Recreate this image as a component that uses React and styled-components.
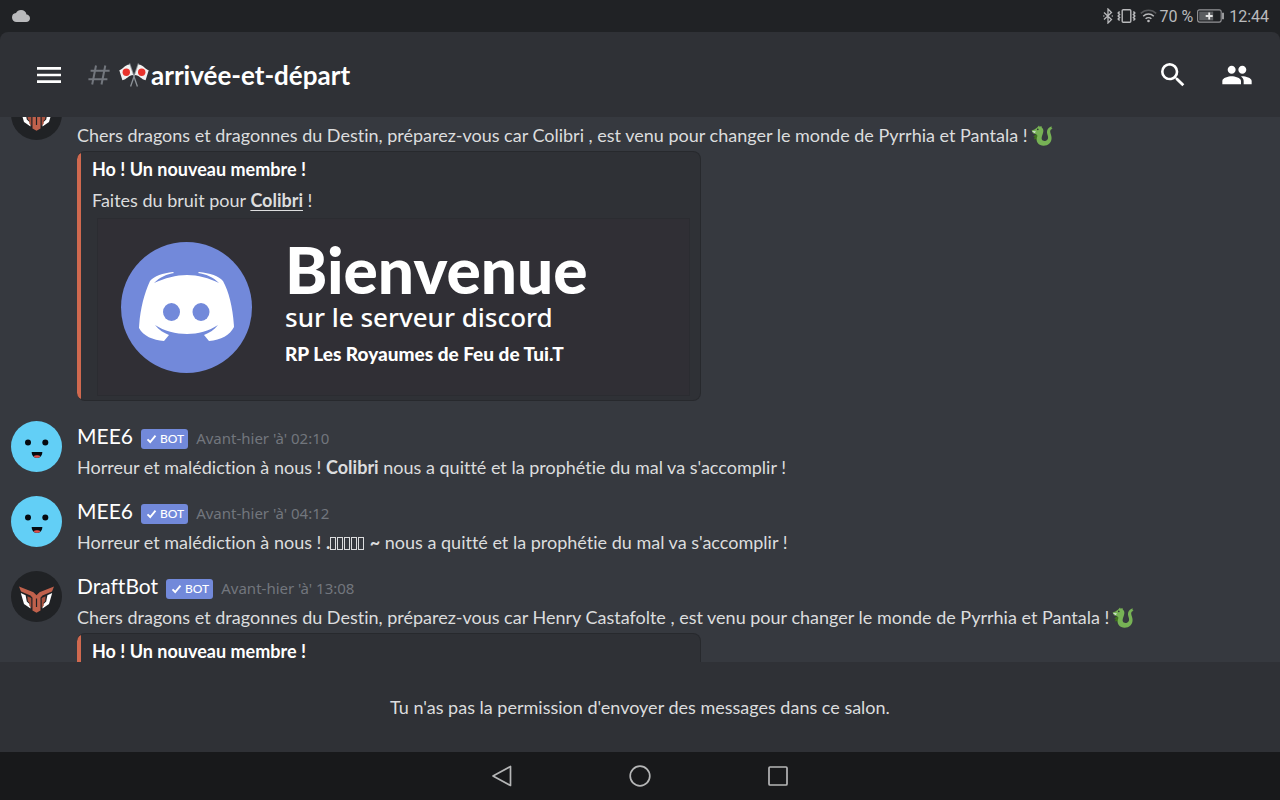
import React, { useLayoutEffect, useRef } from "react";
import styled, { createGlobalStyle } from "styled-components";
import { MdMenu, MdSearch, MdPeople, MdCloud } from "react-icons/md";

const GlobalStyle = createGlobalStyle`
  * {
    box-sizing: border-box;
  }

  body {
    margin: 0;
    background: #202225;
    color: #dcddde;
    font-family: Lato, "Noto Sans", sans-serif;
    font-size: 18px;
    font-variant-ligatures: none;
  }
`;

const Screen = styled.div`
  display: flex;
  flex-direction: column;
  height: 100vh;
  background: #202225;
`;

/* ---------- status bar ---------- */

const StatusBar = styled.div`
  display: flex;
  align-items: center;
  justify-content: space-between;
  flex: none;
  height: 32px;
  padding: 0 11px 0 12px;
  color: #b9babc;
  font-family: Roboto, sans-serif;
  font-size: 16px;
`;

const StatusIcons = styled.div`
  display: flex;
  align-items: center;
  gap: 4px;
`;

const Percent = styled.span`
  margin-left: -2px;
`;

/* ---------- header ---------- */

const Header = styled.header`
  display: flex;
  align-items: center;
  justify-content: space-between;
  flex: none;
  height: 85px;
  padding: 0 27px 0 33px;
  background: #2f3136;
  border-radius: 8px 8px 0 0;
`;

const HeaderGroup = styled.div`
  display: flex;
  align-items: center;
  gap: ${(props) => props.$gap};
`;

const IconButton = styled.button`
  display: flex;
  padding: 0;
  border: 0;
  background: none;
  color: #fff;
  font-size: 32px;
  cursor: pointer;
`;

const ChannelName = styled.h1`
  display: flex;
  align-items: center;
  gap: 2px;
  margin: 0;
  color: #fff;
  font-size: 26px;
  font-weight: 700;
  line-height: 32px;
`;

const Channel = styled.div`
  display: flex;
  align-items: center;
  gap: 9px;
`;

/* ---------- messages ---------- */

const MessageList = styled.main`
  flex: 1;
  min-height: 0;
  padding-top: 20px;
  overflow-y: auto;
  background: #36393f;
  scrollbar-width: none;
`;

const MessageRow = styled.article`
  display: flex;
  gap: 15px;
  padding: 0 11px 13px;
`;

const Avatar = styled.svg`
  flex: none;
  width: 51px;
  height: 51px;
`;

const MessageBody = styled.div`
  flex: 1;
  min-width: 0;
`;

const MessageHead = styled.div`
  display: flex;
  align-items: baseline;
  gap: 8px;
  height: 30px;
  line-height: 30px;
`;

const Author = styled.span`
  color: #fff;
  font-size: 21px;
`;

const BotTag = styled.span`
  display: flex;
  align-items: center;
  gap: 3px;
  height: 20px;
  padding: 0 4px 0 5px;
  border-radius: 3px;
  background: #7289da;
  color: #fff;
  font-size: 12px;
  font-weight: 500;
  line-height: 20px;
`;

const Time = styled.time`
  color: #72767d;
  font-family: "Noto Sans", sans-serif;
  font-size: 15px;
`;

const Text = styled.p`
  margin: 0;
  line-height: 32px;
`;

const MissingGlyph = styled.span`
  display: inline-block;
  width: 6px;
  height: 13px;
  margin-right: 1px;
  border: 1px solid currentColor;
  vertical-align: -1px;
`;

const Emoji = styled.svg`
  margin-left: 3px;
  vertical-align: -4px;
`;

/* ---------- embed ---------- */

const Embed = styled.section`
  max-width: 624px;
  margin-bottom: 7px;
  padding: 2px 10px 4px 15px;
  border: 1px solid #27292d;
  border-left: 0;
  border-radius: 8px;
  background: linear-gradient(to right, #d0694f 4px, #2f3136 4px);
`;

const EmbedTitle = styled.h2`
  margin: 0;
  color: #fff;
  font-size: 18px;
  font-weight: 700;
  line-height: 30px;
`;

const EmbedText = styled.p`
  margin: 0;
  line-height: 32px;
`;

const Underlined = styled.strong`
  text-decoration: underline;
  text-underline-offset: 3px;
`;

const Banner = styled.div`
  display: flex;
  align-items: center;
  gap: 33px;
  height: 178px;
  margin: 2px 0 0 5px;
  padding-left: 23px;
  border: 1px solid #2b2c31;
  background: #302f35;
  color: #fff;
`;

const BannerWords = styled.div`
  display: flex;
  flex-direction: column;
`;

const Welcome = styled.span`
  font-size: 64px;
  font-weight: 900;
  line-height: 60px;
`;

const OnServer = styled.span`
  font-family: "Noto Sans", sans-serif;
  font-size: 26px;
  font-weight: 500;
  line-height: 34px;
`;

const ServerName = styled.span`
  font-size: 19px;
  font-weight: 900;
  line-height: 40px;
`;

/* ---------- bottom ---------- */

const NoPermission = styled.footer`
  display: flex;
  align-items: center;
  justify-content: center;
  flex: none;
  height: 90px;
  background: #2f3136;
`;

const NavBar = styled.nav`
  display: flex;
  align-items: center;
  justify-content: center;
  gap: 114px;
  flex: none;
  height: 48px;
  background: #18191b;
`;

const NavButton = styled.button`
  display: flex;
  padding: 0;
  border: 0;
  background: none;
  color: #b5b6b7;
  cursor: pointer;
`;

/* ---------- drawings ---------- */

const Bluetooth = () => (
  <svg width="10" height="16" viewBox="0 0 10 16" fill="none" stroke="currentColor" strokeWidth="1.3">
    <path d="M1 4.5 8.5 11.5 5 15V1L8.5 4.5 1 11.5" />
    <path d="M0.8 8h.1M9.2 8h.1" strokeLinecap="round" />
  </svg>
);

const Vibrate = () => (
  <svg width="19" height="16" viewBox="0 0 19 16" fill="none" stroke="currentColor" strokeWidth="1.4">
    <rect x="5.2" y="1.7" width="8.6" height="12.6" rx="1" />
    <path d="M2.6 3.5 1.2 5l1.4 1.5L1.2 8l1.4 1.5L1.2 11l1.4 1.5M16.4 3.5 17.8 5l-1.4 1.5L17.8 8l-1.4 1.5 1.4 1.5-1.4 1.5" strokeWidth="1.5" />
  </svg>
);

const Wifi = () => (
  <svg width="17" height="14" viewBox="0 0 17 14" fill="none" stroke="currentColor" strokeWidth="1.5">
    <path d="M.8 4.4a11 11 0 0 1 15.4 0" opacity=".35" />
    <path d="M3.2 7.2a7.6 7.6 0 0 1 10.6 0M5.6 9.8a4.2 4.2 0 0 1 5.8 0" />
    <circle cx="8.5" cy="12" r="1.3" fill="currentColor" stroke="none" />
  </svg>
);

const Battery = () => (
  <svg width="28" height="14" viewBox="0 0 28 14">
    <rect x=".6" y=".9" width="23.6" height="12.2" rx="2" fill="none" stroke="currentColor" strokeOpacity=".75" strokeWidth="1.1" />
    <rect x="2.2" y="2.6" width="14" height="8.8" fill="#5b5d60" />
    <path d="M12.2 3.5v7M8.7 7h7" stroke="#e6e6e6" strokeWidth="1.8" />
    <path d="M26 3.8v6.4" stroke="currentColor" strokeWidth="1.6" />
  </svg>
);

const Hash = () => (
  <svg width="22" height="20" viewBox="0 0 22 20" fill="none" stroke="#72767d" strokeWidth="2">
    <path d="M8 .5 4.2 19.5M17.3.5 13.5 19.5M2.6 5.7h19M.4 14.2h19" />
  </svg>
);

const CrossedFlags = () => (
  <svg width="30" height="24" viewBox="0 0 30 24">
    <path d="M10.5.5 18.4 23.5M19.5.5 11.6 23.5" stroke="#8d9399" strokeWidth="1.3" />
    <path d="M.3 7.2C3.8 6.6 5.4 2 10.6 1.6L14.2 12C9.6 12.2 7.6 16.6 3.4 17.2z" fill="#f1f1f1" />
    <path d="M29.7 7.2C26.2 6.6 24.6 2 19.4 1.6L15.8 12c4.6.2 6.6 4.6 10.8 5.2z" fill="#f1f1f1" />
    <circle cx="7.3" cy="9.3" r="3.7" fill="#e8322b" />
    <circle cx="22.7" cy="9.3" r="3.7" fill="#e8322b" />
  </svg>
);

const Dragon = () => (
  <Emoji width="22" height="21" viewBox="0 0 22 21">
    <path d="M4.6 9.5 2.2 11.4l1.6.7-1 2.3 2.4-.3.9 2.1 2-2.4-.6-4z" fill="#3e721d" />
    <path
      d="M6.2 2.4 8 .6l.6 1.2L10.4.9l.4 1.5C12.4 3.6 12.7 5.6 12 8c-.7 2.6-1.9 4.6-1.1 6.6.8 1.900 4 1.800 5.400.2 1.600-2 .3-4.200-.2-6.600-.5-2.600.6-5.300 3.400-6.500L21 1.600 20.400 3l1.200.8-1.700.7c-1.300 1.500-.6 3.300.1 5.200 1 3 .8 6.500-1.600 8.800-3.300 3.100-9.200 2.900-11.700-.6-1.700-2.500-1.100-4.800-.2-7.100L5.200 9.300 2 8.200.6 5.400 3.400 4.400z"
      fill="#77b255"
    />
    <path d="M.8 6 5 6.4 3.600 8z" fill="#e1e8ed" />
    <circle cx="6.8" cy="4.4" r=".8" fill="#292f33" />
  </Emoji>
);

const DraftBotAvatar = () => (
  <Avatar viewBox="0 0 51 51">
    <circle cx="25.5" cy="25.5" r="25.5" fill="#202225" />
    <path d="M9.800 22 14.600 24.200 15.800 30.600 19.500 34V37.500L13 33z" fill="#fff" />
    <path d="M41.200 22 36.400 24.200 35.200 30.600 31.500 34V37.500L38 33z" fill="#fff" />
    <path
      d="M8 15.600 22.500 21.300 25.500 24.300 28.500 21.300 43 15.600 41 20.600 31.500 24.600 29.500 26.800V39.500L25.500 41.700 21.500 39.500V26.800L19.500 24.600 10 20.600z"
      fill="#c0614c"
    />
    <path d="M16.400 25.200 20.300 27V36.800L18.300 34.800V31.400L16.800 30.200zM34.600 25.200 30.700 27V36.800L32.700 34.800V31.400L34.200 30.200z" fill="#a95340" />
    <path d="M25.500 27.500v8.500" stroke="#202225" strokeWidth="1.200" />
  </Avatar>
);

const Mee6Avatar = () => (
  <Avatar viewBox="0 0 51 51">
    <circle cx="25.5" cy="25.5" r="25.5" fill="#62cff6" />
    <circle cx="17" cy="21.5" r="3" fill="#050a10" />
    <circle cx="34.3" cy="21.5" r="3" fill="#050a10" />
    <path d="M20.7 31h10.600c0 3.500-2 5.800-5.300 5.800S20.700 34.500 20.700 31z" fill="#050a10" />
    <path d="M22.600 35.200c1.500-1.300 5.300-1.300 6.800 0-1.600 2.100-5.200 2.100-6.800 0z" fill="#e0524f" />
  </Avatar>
);

const DiscordLogo = () => (
  <svg width="131" height="131" viewBox="0 0 131 131">
    <circle cx="65.5" cy="65.5" r="65.5" fill="#7289da" />
    <path
      d="M29 39C33 34 42 31 52 30L53 31C46 32 39 35 33 41 44 36 55 33 66 33S88 36 98 41C92 35 85 32 77 31L78 30C89 31 98 34 102 39 108 50 112 66 113 85 109 93 100 98 88 99L83 93C88 91 93 88 97 83 88 89 77 92 66 92S43 89 34 83C38 88 43 91 48 93L43 99C32 98 22 94 18 86 19 68 23 52 29 39z"
      fill="#fff"
    />
    <ellipse cx="50.5" cy="70" rx="8.5" ry="9" fill="#7289da" />
    <ellipse cx="80" cy="70" rx="8.5" ry="9" fill="#7289da" />
  </svg>
);

const Check = () => (
  <svg width="11" height="10" viewBox="0 0 11 10" fill="none" stroke="currentColor" strokeWidth="1.9">
    <path d="M1.5 5.3 4.2 8 9.5 1.7" />
  </svg>
);

/* ---------- parts ---------- */

const Message = ({ avatar, author, time, children }) => (
  <MessageRow>
    {avatar}
    <MessageBody>
      <MessageHead>
        <Author>{author}</Author>
        <BotTag>
          <Check />
          BOT
        </BotTag>
        <Time>{time}</Time>
      </MessageHead>
      {children}
    </MessageBody>
  </MessageRow>
);

const WelcomeEmbed = ({ member }) => (
  <Embed>
    <EmbedTitle>Ho ! Un nouveau membre !</EmbedTitle>
    <EmbedText>
      Faites du bruit pour <Underlined>{member}</Underlined> !
    </EmbedText>
    <Banner>
      <DiscordLogo />
      <BannerWords>
        <Welcome>Bienvenue</Welcome>
        <OnServer>sur le serveur discord</OnServer>
        <ServerName>RP Les Royaumes de Feu de Tui.T</ServerName>
      </BannerWords>
    </Banner>
  </Embed>
);

const App = () => {
  const listRef = useRef(null);

  // open the channel part way through the first message
  useLayoutEffect(() => {
    listRef.current.scrollTop = 48;
  }, []);

  return (
    <Screen>
      <GlobalStyle />
      <StatusBar>
        <MdCloud size={18} />
        <StatusIcons>
          <Bluetooth />
          <Vibrate />
          <Wifi />
          <Percent>70 %</Percent>
          <Battery />
          <span>12:44</span>
        </StatusIcons>
      </StatusBar>

      <Header>
        <HeaderGroup $gap="23px">
          <IconButton aria-label="Menu">
            <MdMenu />
          </IconButton>
          <Channel>
            <Hash />
            <ChannelName>
              <CrossedFlags />
              arrivée-et-départ
            </ChannelName>
          </Channel>
        </HeaderGroup>
        <HeaderGroup $gap="32px">
          <IconButton aria-label="Rechercher">
            <MdSearch />
          </IconButton>
          <IconButton aria-label="Membres">
            <MdPeople />
          </IconButton>
        </HeaderGroup>
      </Header>

      <MessageList ref={listRef}>
        <Message avatar={<DraftBotAvatar />} author="DraftBot" time="Avant-hier 'à' 02:08">
          <Text>
            Chers dragons et dragonnes du Destin, préparez-vous car Colibri , est venu pour changer le monde de Pyrrhia et Pantala !
            <Dragon />
          </Text>
          <WelcomeEmbed member="Colibri" />
        </Message>
        <Message avatar={<Mee6Avatar />} author="MEE6" time="Avant-hier 'à' 02:10">
          <Text>
            Horreur et malédiction à nous ! <strong>Colibri</strong> nous a quitté et la prophétie du mal va s'accomplir !
          </Text>
        </Message>
        <Message avatar={<Mee6Avatar />} author="MEE6" time="Avant-hier 'à' 04:12">
          <Text>
            Horreur et malédiction à nous !{" "}
            <strong>
              .
              <MissingGlyph />
              <MissingGlyph />
              <MissingGlyph />
              <MissingGlyph />
              <MissingGlyph />
              {" ~"}
            </strong>{" "}
            nous a quitté et la prophétie du mal va s'accomplir !
          </Text>
        </Message>
        <Message avatar={<DraftBotAvatar />} author="DraftBot" time="Avant-hier 'à' 13:08">
          <Text>
            Chers dragons et dragonnes du Destin, préparez-vous car Henry Castafolte , est venu pour changer le monde de Pyrrhia et Pantala !
            <Dragon />
          </Text>
          <WelcomeEmbed member="Henry Castafolte" />
        </Message>
      </MessageList>

      <NoPermission>Tu n'as pas la permission d'envoyer des messages dans ce salon.</NoPermission>

      <NavBar>
        <NavButton aria-label="Retour">
          <svg width="24" height="24" viewBox="0 0 24 24" fill="none" stroke="currentColor" strokeWidth="1.7" strokeLinejoin="round">
            <path d="M20.5 2.5v19L3 12z" />
          </svg>
        </NavButton>
        <NavButton aria-label="Accueil">
          <svg width="24" height="24" viewBox="0 0 24 24" fill="none" stroke="currentColor" strokeWidth="1.7">
            <circle cx="12" cy="12" r="9.8" />
          </svg>
        </NavButton>
        <NavButton aria-label="Applications">
          <svg width="24" height="24" viewBox="0 0 24 24" fill="none" stroke="currentColor" strokeWidth="1.7">
            <rect x="3" y="3" width="18" height="18" rx="1" />
          </svg>
        </NavButton>
      </NavBar>
    </Screen>
  );
};

export default App;
